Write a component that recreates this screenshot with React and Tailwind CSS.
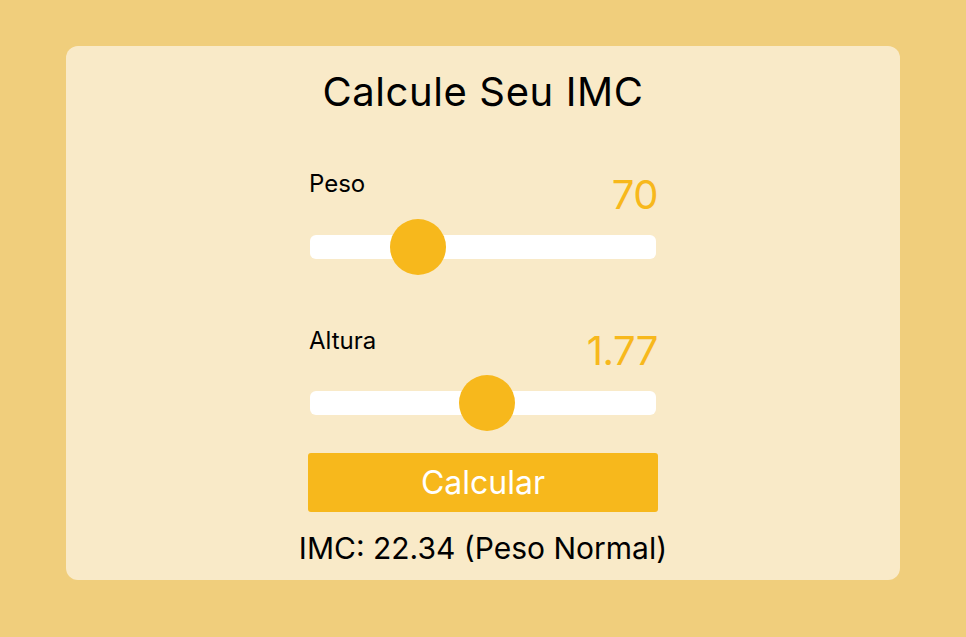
import React, { useState } from 'react';

const sliderClass =
  'block w-full h-6 appearance-none bg-white rounded-md outline-none cursor-pointer ' +
  '[&::-webkit-slider-thumb]:appearance-none [&::-webkit-slider-thumb]:w-14 [&::-webkit-slider-thumb]:h-14 ' +
  '[&::-webkit-slider-thumb]:rounded-full [&::-webkit-slider-thumb]:bg-[#f7b81c] [&::-webkit-slider-thumb]:border-0';

const Field = ({ label, value, min, max, step, onChange }) => (
  <div className="flex flex-col">
    <div className="flex justify-between items-start">
      <span className="text-[24px] leading-[24px] text-black -ml-[1px]">{label}</span>
      <span className="text-[40px] leading-[40px] mt-[2.5px] -mr-[2px] text-[#f7b81c] tracking-[-0.5px]">{value}</span>
    </div>
    <input
      type="range"
      min={min}
      max={max}
      step={step}
      value={value}
      onChange={(e) => onChange(e.target.value)}
      className={sliderClass + ' mt-[20px]'}
    />
  </div>
);

export default function App() {
  const [peso, setPeso] = useState('70');
  const [altura, setAltura] = useState('1.77');
  const [imc, setImc] = useState('IMC: 22.34 (Peso Normal)');

  const calcular = () => {
    const v = parseFloat(peso) / (parseFloat(altura) * parseFloat(altura));
    let faixa = 'Peso Normal';
    if (v < 18.5) faixa = 'Abaixo do Peso';
    else if (v >= 30) faixa = 'Obesidade';
    else if (v >= 25) faixa = 'Sobrepeso';
    setImc(`IMC: ${v.toFixed(2)} (${faixa})`);
  };

  return (
    <div
      className="h-[637px] bg-[#f0ce7c] pt-[46px] px-[66px]"
      style={{ fontFamily: '"Inter", "Open Sans", sans-serif' }}
    >
      <div className="bg-[#f9eac8] rounded-xl h-[534px] flex flex-col items-center pt-[22px]">
        <h1 className="text-[40px] leading-[48px] text-black tracking-[0.6px]">Calcule Seu IMC</h1>
        <div className="w-[346px] flex flex-col mt-[56px]">
          <Field label="Peso" value={peso} min="30" max="175" step="1" onChange={setPeso} />
          <div className="h-[70px]" />
          <Field label="Altura" value={altura} min="1" max="2.5" step="0.01" onChange={setAltura} />
        </div>
        <button
          onClick={calcular}
          className="mt-[38px] w-[350px] h-[59px] bg-[#f7b81c] rounded-[3px] text-white text-[32px] leading-[40px]"
        >
          Calcular
        </button>
        <p className="mt-[18px] text-[30px] leading-[36px] text-black">{imc}</p>
      </div>
    </div>
  );
}
